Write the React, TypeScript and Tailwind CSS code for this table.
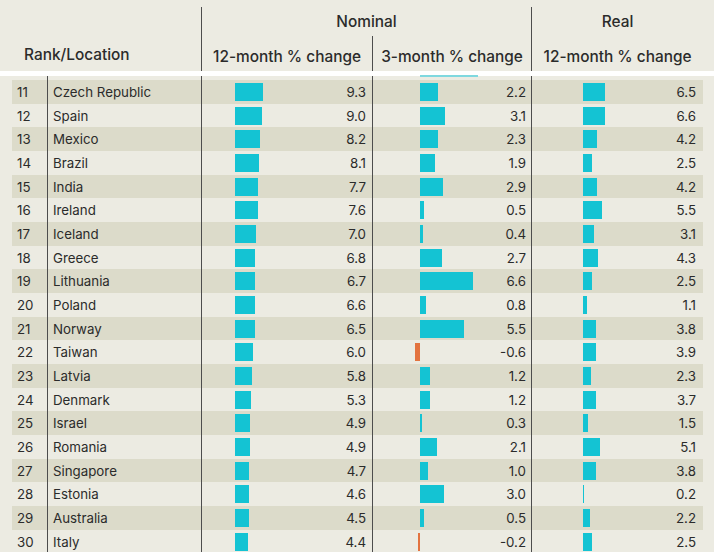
import React from 'react';

type Row = [number, string, number, number, number];

const rows: Row[] = [
  [11, 'Czech Republic', 9.3, 2.2, 6.5],
  [12, 'Spain', 9.0, 3.1, 6.6],
  [13, 'Mexico', 8.2, 2.3, 4.2],
  [14, 'Brazil', 8.1, 1.9, 2.5],
  [15, 'India', 7.7, 2.9, 4.2],
  [16, 'Ireland', 7.6, 0.5, 5.5],
  [17, 'Iceland', 7.0, 0.4, 3.1],
  [18, 'Greece', 6.8, 2.7, 4.3],
  [19, 'Lithuania', 6.7, 6.6, 2.5],
  [20, 'Poland', 6.6, 0.8, 1.1],
  [21, 'Norway', 6.5, 5.5, 3.8],
  [22, 'Taiwan', 6.0, -0.6, 3.9],
  [23, 'Latvia', 5.8, 1.2, 2.3],
  [24, 'Denmark', 5.3, 1.2, 3.7],
  [25, 'Israel', 4.9, 0.3, 1.5],
  [26, 'Romania', 4.9, 2.1, 5.1],
  [27, 'Singapore', 4.7, 1.0, 3.8],
  [28, 'Estonia', 4.6, 3.0, 0.2],
  [29, 'Australia', 4.5, 0.5, 2.2],
  [30, 'Italy', 4.4, -0.2, 2.5],
];

// bar start inside cell (px from the cell's left border) and px per unit
const Bar = ({ value, zero, scale }: { value: number; zero: number; scale: number }) => {
  const w = Math.abs(value) * scale;
  const neg = value < 0;
  return (
    <div
      className={`absolute top-[3px] h-[18px] ${neg ? 'bg-[#e3733f]' : 'bg-[#14c3d3]'}`}
      style={{ left: neg ? zero - w : zero, width: Math.max(w, 1) }}
    />
  );
};

const App: React.FC = () => {
  return (
    <div className="w-[714px] h-[552px] overflow-hidden bg-[#ecebe2] text-[#2b2b2b] font-['Inter','Liberation_Sans',sans-serif]">
      {/* Header */}
      <div className="flex h-[71px] text-[15.4px] font-medium">
        <div className="w-[201px] flex items-end pl-[24px] pb-[5px]">Rank/Location</div>
        <div className="w-[330px] mt-[7px] border-l border-[#4d4d4d] flex flex-col">
          <div className="h-[29px] flex items-center justify-center">Nominal</div>
          <div className="flex flex-1">
            <div className="w-[170px] flex items-center justify-center pt-[6px]">12-month % change</div>
            <div className="flex-1 border-l border-[#4d4d4d] flex items-center justify-center pt-[6px]">
              3-month % change
            </div>
          </div>
        </div>
        <div className="w-[172px] mt-[7px] border-l border-[#4d4d4d] flex flex-col">
          <div className="h-[29px] flex items-center justify-center">Real</div>
          <div className="flex-1 flex items-center justify-center pt-[6px]">12-month % change</div>
        </div>
      </div>
      <div className="h-[5px] bg-white" />

      {/* Body */}
      <div className="ml-[12px] w-[691px] text-[13.3px]">
        <div className="flex h-[4px]">
          <div className="w-[35px]" />
          <div className="w-[154px] border-l border-[#4d4d4d]" />
          <div className="w-[171px] border-l border-[#4d4d4d]" />
          <div className="w-[159px] border-l border-[#4d4d4d] relative">
            <div className="absolute left-[47px] top-[-1px] h-[2px] w-[58px] bg-[#7fd8df]" />
          </div>
          <div className="w-[172px] border-l border-[#4d4d4d]" />
        </div>
        {rows.map(([rank, name, nom12, nom3, real12], i) => (
          <div key={rank} className={`flex h-[23.68px] ${i % 2 === 0 ? 'bg-[#dcdbca]' : ''}`}>
            <div className="w-[35px] pl-[5px] pt-[2px] flex items-center">{rank}</div>
            <div className="w-[154px] border-l border-[#4d4d4d] pl-[5px] pt-[2px] flex items-center">{name}</div>
            <div className="w-[171px] border-l border-[#4d4d4d] relative flex items-center justify-end pr-[6px] pt-[2px]">
              <Bar value={nom12} zero={33} scale={3} />
              <span>{nom12.toFixed(1)}</span>
            </div>
            <div className="w-[159px] border-l border-[#4d4d4d] relative flex items-center justify-end pr-[5px] pt-[2px]">
              <Bar value={nom3} zero={47} scale={8} />
              <span>{nom3.toFixed(1)}</span>
            </div>
            <div className="w-[172px] border-l border-[#4d4d4d] relative flex items-center justify-end pr-[7px] pt-[2px]">
              <Bar value={real12} zero={51} scale={3.4} />
              <span>{real12.toFixed(1)}</span>
            </div>
          </div>
        ))}
      </div>
    </div>
  );
};

export default App;
